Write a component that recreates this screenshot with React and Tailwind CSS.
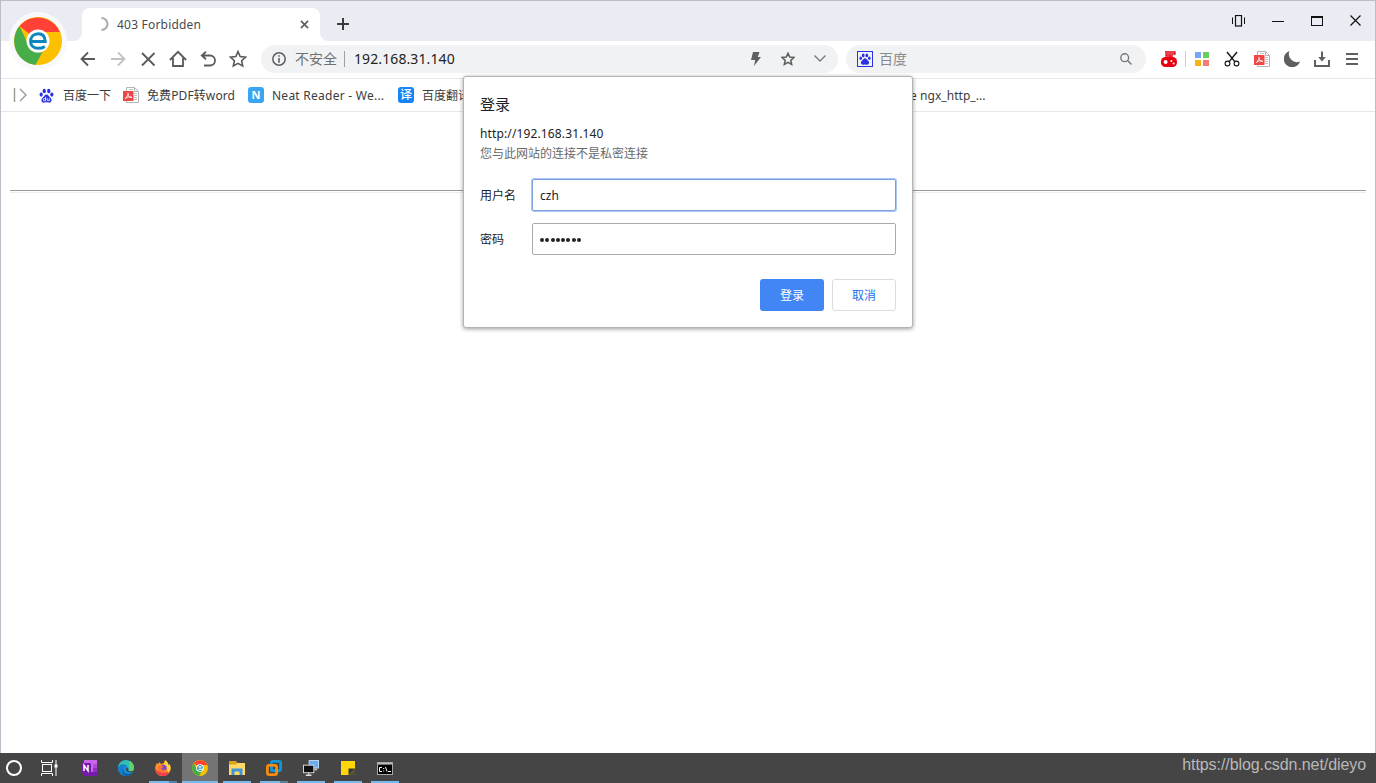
import clsx from 'clsx';

function BrowserLogo({ size }) {
  return (
    <svg width={size} height={size} viewBox="0 0 48 48">
      <circle cx="24" cy="24" r="24" fill="#fcc000" />
      <path d="M24 24 L5.5 9 A24 24 0 0 1 45.8 15 L24 15 Z" fill="#ff4235" />
      <path d="M5.5 9 A24 24 0 0 0 21.5 47.9 L29 34 L13 25 Z" fill="#47ad49" />
      <circle cx="24" cy="24" r="11.5" fill="#fff" />
      <path d="M16.5 24.4 H31.2 C31 19.2 28.4 16.7 24.2 16.7 C19.8 16.7 16.6 19.8 16.6 24.2 C16.6 28.6 19.7 31.3 24.3 31.3 C27 31.3 29 30.6 30.8 29.6" fill="none" stroke="#0d86bd" strokeWidth="3" />
    </svg>
  );
}

function Paw({ size, color = '#2932e1', du }) {
  return (
    <svg width={size} height={size} viewBox="0 0 16 16" fill={color}>
      <ellipse cx="5.6" cy="3.2" rx="1.8" ry="2.5" />
      <ellipse cx="10.4" cy="3.2" rx="1.8" ry="2.5" />
      <ellipse cx="2.3" cy="7" rx="1.7" ry="2.3" />
      <ellipse cx="13.7" cy="7" rx="1.7" ry="2.3" />
      <path d="M8 7 C6.2 7 5.7 8.9 4.2 10 C1.4 12.1 2.6 15.6 5.2 15.6 C6.5 15.6 6.7 15.2 8 15.2 C9.3 15.2 9.5 15.6 10.8 15.6 C13.4 15.6 14.6 12.1 11.8 10 C10.3 8.9 9.8 7 8 7 Z" />
      {du && (
        <path d="M7 9.5 V13.7 M7 11.3 H5.6 Q4.6 11.3 4.6 12.5 Q4.6 13.6 5.6 13.6 H7 M8.8 11 V12.8 Q8.8 13.6 9.8 13.6 H11 V11" fill="none" stroke="#fff" strokeWidth="0.9" />
      )}
    </svg>
  );
}

function PdfIcon() {
  return (
    <svg width="16" height="16" viewBox="0 0 16 16">
      <path d="M3.5 0.5 H11.5 L15.5 4.5 V15.5 H3.5 Z" fill="#fff" stroke="#b5b5b5" />
      <path d="M11.5 0.5 V4.5 H15.5" fill="none" stroke="#b5b5b5" />
      <path d="M6 2.5 H10 M11 6.5 H14 M11 8.5 H14 M11 10.5 H14 M11 12.5 H14" stroke="#c3c3c3" />
      <rect y="4" width="10.5" height="10" fill="#ee4845" />
      <path d="M4.8 5.8 C5.6 6.4 5 8.8 2 12 M5 7 C5.2 9.2 6.5 10.3 9 10.6 M3 10.8 C5 9.8 7 9.6 8.8 10.2" fill="none" stroke="#fff" strokeWidth="0.9" />
    </svg>
  );
}

function Icon({ children, size = 18, color = '#5a5a5a', width = 1.8 }) {
  return (
    <svg width={size} height={size} viewBox="0 0 18 18" fill="none" stroke={color} strokeWidth={width}>
      {children}
    </svg>
  );
}

const STAR = 'M9 1.6 L11.2 6.5 L16.6 7.1 L12.6 10.7 L13.7 16 L9 13.3 L4.3 16 L5.4 10.7 L1.4 7.1 L6.8 6.5 Z';

const navIcons = [
  <Icon key="back"><path d="M16 9 H3 M9 2.5 L2.5 9 L9 15.5" /></Icon>,
  <Icon key="fwd" color="#c2c2c2"><path d="M2 9 H15 M9 2.5 L15.5 9 L9 15.5" /></Icon>,
  <Icon key="stop"><path d="M3 3 L15.5 15.5 M15.5 3 L3 15.5" /></Icon>,
  <Icon key="home"><path d="M0.9 10 L9 1.8 L17.1 10 M4 8 V16 H14 V8" /></Icon>,
  <Icon key="undo"><path d="M7 1.8 L2.8 5.5 L7 9.2 M3 5.5 H11 A5 5 0 0 1 11 15.5 H5" /></Icon>,
  <Icon key="star"><path d={STAR} strokeWidth="1.6" /></Icon>,
];

const toolIcons = [
  <svg key="apps" width="14" height="14" viewBox="0 0 14 14">
    <rect width="6" height="6" fill="#78a5fa" />
    <rect x="8" width="6" height="6" fill="#63d05d" />
    <rect y="8" width="6" height="6" fill="#f8b31c" />
    <rect x="8" y="8" width="6" height="6" fill="#f47c77" />
  </svg>,
  <svg key="cut" width="16" height="16" viewBox="0 0 16 16" fill="none" stroke="#111" strokeWidth="1.1">
    <path d="M3 1 L10.8 10.6 M13 1 L5.2 10.6" strokeWidth="1.4" />
    <circle cx="3.5" cy="12.5" r="2.4" />
    <circle cx="12.5" cy="12.5" r="2.4" />
  </svg>,
  <PdfIcon key="pdf" />,
  <svg key="moon" width="16" height="16" viewBox="0 0 16 16">
    <path d="M5.5 0 A8.3 8.3 0 1 0 16 10.4 A8 8 0 0 1 5.5 0 Z" fill="#5f5f5f" />
  </svg>,
  <svg key="down" width="16" height="16" viewBox="0 0 16 16" fill="none" stroke="#5f5f5f" strokeWidth="2">
    <path d="M8 0.5 V8 M1 9 V15 H15 V9" />
    <path d="M4.2 6 H11.8 L8 10.5 Z" fill="#5f5f5f" stroke="none" />
  </svg>,
  <svg key="menu" width="12" height="12" viewBox="0 0 12 12" stroke="#5f5f5f" strokeWidth="2">
    <path d="M0 1 H12 M0 6 H12 M0 11 H12" />
  </svg>,
];

const taskApps = [
  {
    name: 'onenote',
    icon: (
      <svg width="16" height="16" viewBox="0 0 16 16">
        <rect x="3" width="13" height="16" fill="#ca64ea" />
        <rect x="12" y="4" width="4" height="4" fill="#ae4bd5" />
        <rect x="12" y="8" width="4" height="4" fill="#9332bf" />
        <rect x="3" y="12" width="13" height="4" fill="#7719aa" />
        <rect y="3" width="10" height="10" rx="1" fill="#7719aa" />
        <path d="M3 11 V5.3 L7 10.7 V5" fill="none" stroke="#fff" strokeWidth="1.5" />
      </svg>
    ),
  },
  {
    name: 'edge',
    icon: (
      <svg width="16" height="16" viewBox="0 0 16 16">
        <circle cx="8" cy="8" r="8" fill="#1a8fd8" />
        <path d="M0.3 6 A8 8 0 0 1 16 8 C16 11 13 12 10.5 11 C11.5 8 9 5 6 5 C3 5 1 6 0.3 8 Z" fill="#35c1b1" />
        <path d="M12 1 A8 8 0 0 1 16 8 C16 11 13 12 10.5 11 C12 9 10 6 12 1 Z" fill="#62d26a" />
        <path d="M0 8 C0.5 4 7 3 9 6 C5 6 4 12 9 15.8 C4 16.5 0 13 0 8 Z" fill="#1680d0" />
        <path d="M5 9 C5 13 9 15.5 14.5 12.5 C13 15 10.5 16 8.5 16 C4 15 4 11 5 9 Z" fill="#115ca5" />
        <path d="M8.5 7.5 C7.5 9 8 12 11.5 12.3 C13 12.4 15 12 15.4 11 L11 11.3 C9.8 11 10.5 10 10.2 8.8 Z" fill="#454545" />
      </svg>
    ),
  },
  {
    name: 'firefox',
    split: true,
    icon: (
      <svg width="16" height="16" viewBox="0 0 16 16">
        <path d="M2 3 L3 4 L4.5 2 L6 4 L9 3 L10 0.3 C13 2 13.5 4 13.5 5 L14.5 4 C16 7 16.5 11 13 14 C10 17 5 16.7 2.3 14 C-0.5 11 -0.3 6 2 3 Z" fill="#ff9325" />
        <path d="M0.3 8 C0.5 14 6 17.5 11 15.3 C14 14 15.5 11.5 15.7 9 C14 13 9 13.5 5 12 C3 11 1 10 0.3 8 Z" fill="#f43b51" />
        <path d="M10 0.3 C13 2 13.5 5 13.5 6 L14.5 4 C16.5 8 15.5 11 13 13 C13 8 10 7 9 4 Z" fill="#ffd43e" />
        <circle cx="8.3" cy="8.2" r="3.5" fill="#7649d8" />
        <path d="M3 6 C5 5 8 6 8.5 7 L6.5 8.5 C7 11 11 10 12 8 C12 12 8 13 5.7 12 C3.5 11 2.5 8.5 3 6 Z" fill="#ff762e" />
      </svg>
    ),
  },
  { name: 'chrome', active: true, icon: <BrowserLogo size={16} /> },
  {
    name: 'explorer',
    icon: (
      <svg width="16" height="14" viewBox="0 0 16 14">
        <path d="M0 0 H6.5 L8.5 2 H16 V14 H0 Z" fill="#ffd867" />
        <path d="M0 0 H6.5 L8.5 2 L7 3.5 H0 Z" fill="#dca01a" />
        <path d="M2.5 14 V7.5 H13.5 V14 H10.5 V10.5 H5.5 V14 Z" fill="#3f95dc" />
      </svg>
    ),
  },
  {
    name: 'vmware',
    split: true,
    icon: (
      <svg width="16" height="16" viewBox="0 0 16 16" fill="none" strokeWidth="2.8">
        <rect x="5.4" y="1.4" width="9.2" height="9.2" rx="1.5" stroke="#1695d3" />
        <rect x="1.4" y="5.4" width="9.2" height="9.2" rx="1.5" stroke="#f48b12" />
        <path d="M5.4 8 V10.6 H8.8" stroke="#1695d3" strokeWidth="1.8" />
      </svg>
    ),
  },
  {
    name: 'remote',
    icon: (
      <svg width="16" height="16" viewBox="0 0 17 17">
        <rect x="6.5" y="0.5" width="10" height="8" fill="#67adf0" stroke="#c4d9ed" />
        <rect x="12" y="9" width="3" height="2" fill="#bbb" />
        <rect x="0.5" y="5.5" width="11" height="8" fill="#111" stroke="#ddd" />
        <path d="M6 14 V16 M3 16.2 H9" stroke="#ddd" strokeWidth="1.5" />
      </svg>
    ),
  },
  {
    name: 'notes',
    icon: (
      <svg width="14" height="14" viewBox="0 0 14 14">
        <rect width="14" height="14" fill="#ffd60a" />
        <path d="M14 7.5 V14 H7.5 Z" fill="#555038" />
        <path d="M7.5 14 V7.5 H14 Z" fill="#343434" />
      </svg>
    ),
  },
  {
    name: 'cmd',
    icon: (
      <svg width="16" height="13" viewBox="0 0 16 13">
        <rect x="0.5" y="0.5" width="15" height="12" fill="#000" stroke="#a8a8a8" />
        <rect x="1" y="1" width="14" height="1.6" fill="#bcbcbc" />
        <path d="M5 5.5 H2.5 V9.5 H5 M6.7 6 V7 M6.7 8.5 V9.5 M8.5 5 L10 9.5 M11 9.5 H14" fill="none" stroke="#fff" />
      </svg>
    ),
  },
];

function TabStrip() {
  return (
    <div className="h-10 bg-[#eaecf4] flex items-end pl-[73px]">
      {/* flared corner on each side of the tab */}
      <div className="w-2 h-2 bg-white"><div className="w-full h-full bg-[#eaecf4] rounded-br-lg" /></div>
      <div className="w-[238px] h-[33px] bg-white rounded-t-lg flex items-center">
        <svg className="ml-3 -mt-px shrink-0" width="16" height="16" viewBox="0 0 16 16" fill="none" stroke="#aaa" strokeWidth="2">
          <path d="M7.5 2 A6 6 0 0 1 7.5 14" />
        </svg>
        <span className="ml-[7px] w-[186px] text-[12px] tracking-[0.2px] text-[#4a4a4a]">403 Forbidden</span>
        <svg className="shrink-0 -ml-[3px] -mt-px" width="9" height="9" viewBox="0 0 10 10" stroke="#5c5c5c" strokeWidth="1.8">
          <path d="M1 1 L9 9 M9 1 L1 9" />
        </svg>
      </div>
      <div className="w-2 h-2 bg-white"><div className="w-full h-full bg-[#eaecf4] rounded-bl-lg" /></div>
      <svg className="ml-[9px] mb-[11px]" width="12" height="12" viewBox="0 0 12 12" stroke="#3c3c3c" strokeWidth="2">
        <path d="M6 0 V12 M0 6 H12" />
      </svg>
      <div className="ml-auto h-10 flex items-center text-[#111]">
        <div className="w-[39px] flex justify-center">
          <svg width="13" height="12" viewBox="0 0 13 12" fill="none" stroke="currentColor">
            <path d="M0.5 2.5 V9 M12.5 2.5 V9" />
            <rect x="3.5" y="0.5" width="6" height="10.5" strokeWidth="1.2" />
          </svg>
        </div>
        <div className="w-[39px] flex justify-center"><div className="w-3 h-px bg-[#111]" /></div>
        <div className="w-[39px] flex justify-center"><div className="w-3 h-2.5 border border-t-2 border-[#111]" /></div>
        <div className="w-[39px] flex justify-center">
          <svg className="-mt-0.5" width="11" height="11" viewBox="0 0 11 11" stroke="currentColor" strokeWidth="1.2">
            <path d="M0.5 0.5 L10.5 10.5 M10.5 0.5 L0.5 10.5" />
          </svg>
        </div>
      </div>
    </div>
  );
}

function Toolbar() {
  return (
    <div className="h-[37px] flex items-center pl-[72px] pr-2 pb-0.5">
      {navIcons.map((icon, i) => (
        <div key={i} className="w-[30px] flex justify-center">{icon}</div>
      ))}
      <div className="ml-2 w-[577px] h-7 rounded-full bg-[#f1f2f4] flex items-center text-sm">
        <svg className="ml-[11px] shrink-0" width="14" height="14" viewBox="0 0 14 14" fill="none" stroke="#5f5f5f">
          <circle cx="7" cy="7" r="6.2" strokeWidth="1.5" />
          <path d="M7 3.2 V4.8 M7 6 V10.8" strokeWidth="1.6" />
        </svg>
        <span className="ml-[9px] text-[#707070]">不安全</span>
        <div className="ml-[7px] w-px h-4 bg-[#a0a0a0]" />
        <span className="ml-[9px] tracking-[0.1px] text-[#222]">192.168.31.140</span>
        <svg className="ml-auto" width="10" height="14" viewBox="0 0 10 14">
          <path d="M2 0 H8.5 L6.8 5 H10 L3 14 L4.2 8 H0 Z" fill="#5f5f5f" />
        </svg>
        <svg className="ml-5" width="14" height="14" viewBox="0 0 18 18" fill="none" stroke="#5f5f5f" strokeWidth="2">
          <path d={STAR} />
        </svg>
        <svg className="ml-[19px] mr-3" width="12" height="7" viewBox="0 0 12 7" fill="none" stroke="#777" strokeWidth="1.3">
          <path d="M0.5 0.5 L6 6 L11.5 0.5" />
        </svg>
      </div>
      <div className="ml-2 w-[300px] h-7 rounded-full bg-[#f1f2f4] flex items-center text-sm">
        <div className="ml-[11px] w-4 h-4 border border-[#2932e1] flex items-center justify-center"><Paw size={12} /></div>
        <span className="ml-1.5 text-[#8a8a8a]">百度</span>
        <svg className="ml-auto mr-3.5" width="12" height="12" viewBox="0 0 12 12" fill="none" stroke="#777" strokeWidth="1.4">
          <circle cx="4.7" cy="4.7" r="3.9" />
          <path d="M7.6 7.6 L11.5 11.5" />
        </svg>
      </div>
      <svg className="ml-[15px]" width="16" height="16" viewBox="0 0 16 16">
        <path d="M4 1 H14 V3 H5 V5 H12 M9 4 V7" fill="none" stroke="#e60012" strokeWidth="1.3" />
        <rect y="6" width="16" height="10" rx="4.5" fill="#e60012" />
        <circle cx="4.6" cy="11" r="2" fill="#fff" />
        <circle cx="10.4" cy="10" r="1" fill="#fff" />
        <circle cx="12.6" cy="12.4" r="1" fill="#fff" />
      </svg>
      <div className="ml-2 w-px h-4 bg-[#ccc]" />
      <div className="ml-px flex items-center">
        {toolIcons.map((icon, i) => (
          <div key={i} className="w-[30px] flex justify-center">{icon}</div>
        ))}
      </div>
    </div>
  );
}

function Bookmarks() {
  return (
    <div className="h-[34px] border-y border-[#e6e7e9] flex items-center pl-3 text-[12px] text-[#3c3c3c] whitespace-nowrap">
      <svg width="14" height="14" viewBox="0 0 14 14" fill="none" stroke="#999" strokeWidth="1.4">
        <path d="M1.5 0 V14 M7 1 L13 7 L7 13" />
      </svg>
      <span className="ml-3"><Paw size={15} du /></span>
      <span className="ml-[9px] pt-0.5 w-[60px]">百度一下</span>
      <PdfIcon />
      <span className="ml-2 pt-0.5 w-[101px] tracking-[0.1px]">免费PDF转word</span>
      <div className="w-4 h-4 rounded-[3px] bg-[#3aa5f0] text-white text-[11px] leading-4 font-bold text-center">N</div>
      <span className="ml-2 pt-0.5 w-[126px] tracking-[0.25px]">Neat Reader - We...</span>
      <div className="w-4 h-4 rounded-[3px] bg-[#1485f8] text-white text-[12px] leading-[15px] font-medium text-center">译</div>
      <span className="ml-2 pt-0.5 w-12">百度翻译</span>
      <span className="ml-[440px] pt-0.5 tracking-[0.05px]">e ngx_http_...</span>
    </div>
  );
}

function LoginDialog() {
  return (
    <div className="absolute left-[463px] top-[76px] w-[450px] h-[252px] bg-white border border-[#b4b4b4] rounded-[3px] shadow-[0_1px_4px_rgba(0,0,0,0.4)] px-4 text-[12px] text-[#222]">
      <h1 className="mt-[17px] text-[15px] leading-5">登录</h1>
      <p className="mt-[10px] leading-5 tracking-[0.13px]">http://192.168.31.140</p>
      <p className="leading-5 text-[#6a6a6a]">您与此网站的连接不是私密连接</p>
      <div className="mt-[15px] flex items-center">
        <span className="w-[52px] pt-0.5">用户名</span>
        <div className="w-[364px] h-8 border border-[#7d9fdc] rounded-[2px] shadow-[0_0_0_1px_#adc8f7] px-[7px] leading-[31px]">czh</div>
      </div>
      <div className="mt-3 flex items-center">
        <span className="w-[52px] pt-0.5">密码</span>
        <div className="w-[364px] h-8 border border-[#ababab] rounded-[2px] px-[7px] pt-0.5 flex items-center gap-[1.3px]">
          {Array.from({ length: 8 }, (_, i) => (
            <span key={i} className="w-1 h-1 rounded-full bg-[#222]" />
          ))}
        </div>
      </div>
      <div className="mt-6 flex justify-end gap-2">
        <button className="w-16 h-8 pt-0.5 rounded-[3px] bg-[#4285f4] text-white">登录</button>
        <button className="w-16 h-8 pt-0.5 rounded-[3px] border border-[#dadce0] text-[#1a73e8]">取消</button>
      </div>
    </div>
  );
}

function Taskbar() {
  return (
    <div className="relative h-[30px] bg-[#454545] flex items-center">
      <div className="w-7 flex justify-center">
        <div className="w-4 h-4 rounded-full border-2 border-white" />
      </div>
      <div className="w-[43px] flex justify-center">
        <svg width="17" height="16" viewBox="0 0 17 16" fill="none" stroke="#fff">
          <path d="M0.5 0 V2.5 H11.5 V0 M0.5 16 V13.5 H11.5 V16 M15 0 V16" />
          <rect x="1.5" y="4.5" width="9" height="7" />
          <rect x="13.5" y="4.5" width="3" height="3" fill="#fff" stroke="none" />
        </svg>
      </div>
      {taskApps.map((app, i) => (
        <div
          key={app.name}
          className={clsx('mr-px w-9 h-[30px] flex flex-col items-center', app.active && 'bg-[#747474]')}
        >
          <div className="h-7 pt-0.5 flex items-center">{app.icon}</div>
          {i > 1 && (
            <div className={clsx('h-0.5 bg-[#76b9ed] flex justify-end', app.active ? 'w-9' : 'w-7')}>
              {app.split && <div className="w-2 bg-[#56809f]" />}
            </div>
          )}
        </div>
      ))}
      <span className="absolute right-2.5 top-0 font-['Liberation_Sans',sans-serif] text-[16px] leading-[23px] tracking-[-0.08px] text-[#b9b9b9]">
        https://blog.csdn.net/dieyo
      </span>
    </div>
  );
}

export default function App() {
  return (
    <div className="relative w-[1376px] h-[783px] overflow-hidden bg-white flex flex-col font-['Noto_Sans','Noto_Sans_CJK_SC',sans-serif]">
      <div className="flex-1 border border-b-0 border-[#bbbcc5]">
        <TabStrip />
        <Toolbar />
        <Bookmarks />
        <div className="mt-[78px] mx-[9px] h-[3px] border-t border-[#999] border-b border-b-[#eee]" />
      </div>
      <Taskbar />

      <div className="absolute left-[9px] top-3 w-[58px] h-[58px] rounded-full bg-[#f8f9fc] flex items-center justify-center">
        <BrowserLogo size={48} />
      </div>
      <LoginDialog />
    </div>
  );
}
